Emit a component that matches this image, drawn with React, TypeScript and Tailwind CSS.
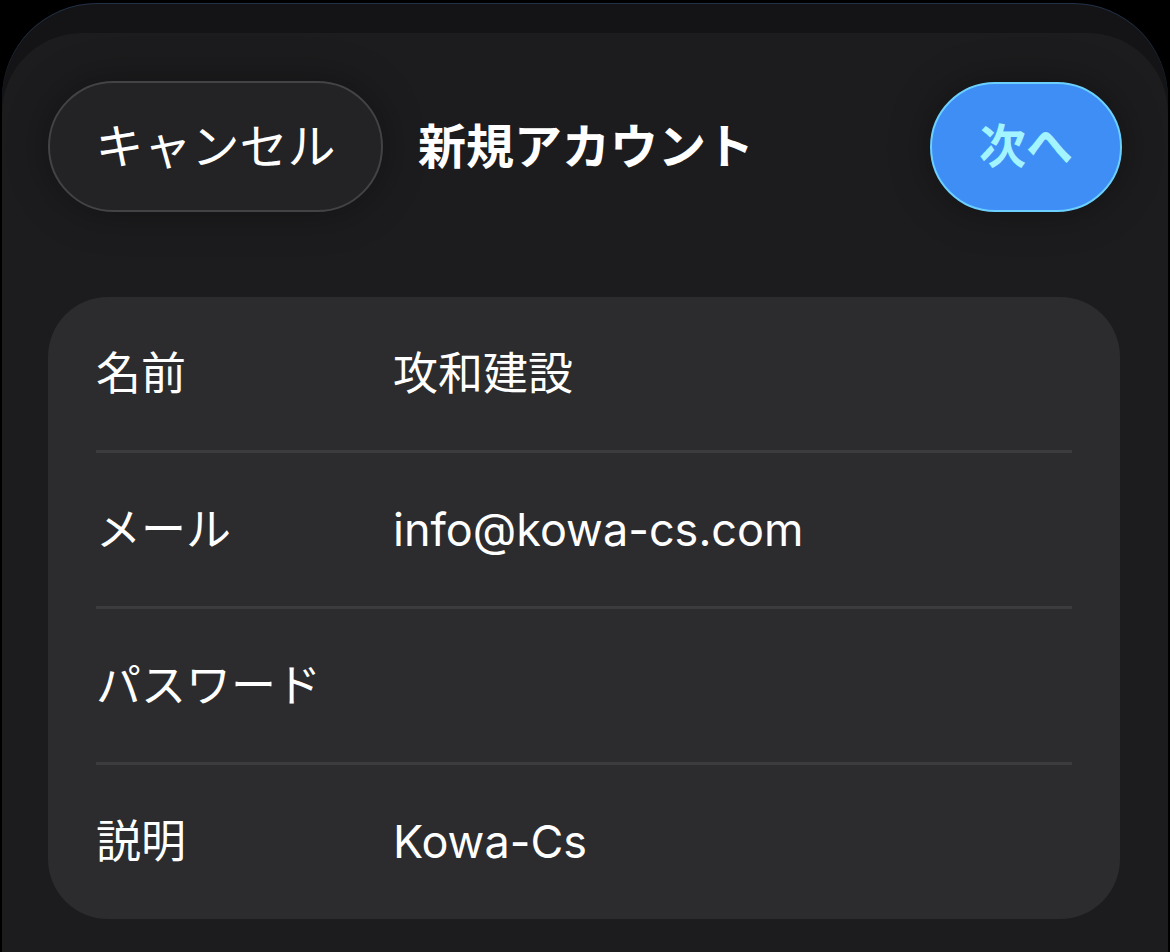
import React from "react";

const FONT = "font-['Inter','Noto_Sans_CJK_JP',sans-serif]";

const ROWS = [
  { label: "名前", value: "攻和建設" },
  { label: "メール", value: "info@kowa-cs.com" },
  { label: "パスワード", value: "" },
  { label: "説明", value: "Kowa-Cs" },
];

export default function App() {
  return (
    <div className={`h-[952px] w-[1170px] overflow-hidden bg-black pt-[3px] px-[2px] ${FONT}`}>
      {/* back sheet */}
      <div className="h-full rounded-t-[95px] bg-[#141416] pt-[30px] shadow-[inset_0_1px_0_rgba(80,140,220,0.25)]">
        {/* front sheet */}
        <div className="h-full rounded-t-[80px] bg-[#1c1c1e] px-[46px] pt-[48px]">
          {/* Header */}
          <div className="flex items-center">
            <button className="flex h-[131px] w-[335px] items-center justify-center rounded-full border-2 border-[#434346] bg-[#232325] text-[48px] text-white shadow-[0_0_40px_rgba(0,0,0,0.35)]">
              キャンセル
            </button>
            <h1 className="ml-[35px] text-[48px] font-bold text-white">新規アカウント</h1>
            <button className="ml-auto flex h-[130px] w-[192px] items-center justify-center rounded-full border-2 border-[#6cd0ff] bg-[#3f8ef5] text-[47px] font-bold text-[#a3f4ff] shadow-[0_0_40px_rgba(0,0,0,0.35)]">
              次へ
            </button>
          </div>

          {/* Form card */}
          <div className="mt-[85px] w-[1072px] rounded-[60px] bg-[#2c2c2e] px-[48px]">
            {ROWS.map((row, i) => (
              <div
                key={row.label}
                className={`flex items-center text-[45px] text-white ${i < ROWS.length - 1 ? "h-[156px] border-b-[3px] border-[#3c3c3f]" : "h-[154px]"}`}
              >
                <span className="w-[297px] shrink-0">{row.label}</span>
                <span>{row.value}</span>
              </div>
            ))}
          </div>
        </div>
      </div>
    </div>
  );
}
